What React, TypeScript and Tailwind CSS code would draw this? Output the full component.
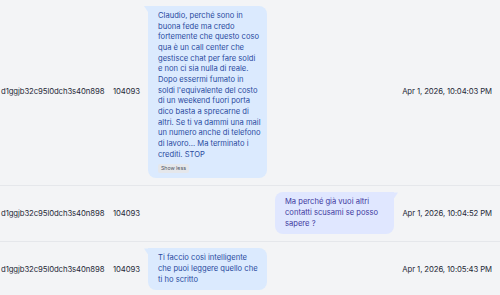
import React from "react";

type Msg = {
  id: string;
  num: string;
  lines: string[];
  out: boolean;
  date: string;
  showLess?: boolean;
};

const rows: Msg[] = [
  {
    id: "d1ggjb32c95l0dch3s40n898",
    num: "104093",
    lines: [
      "Claudio, perché sono in",
      "buona fede ma credo",
      "fortemente che questo coso",
      "qua è un call center che",
      "gestisce chat per fare soldi",
      "e non ci sia nulla di reale.",
      "Dopo essermi fumato in",
      "soldi l'equivalente del costo",
      "di un weekend fuori porta",
      "dico basta a sprecarne di",
      "altri. Se ti va dammi una mail",
      "un numero anche di telefono",
      "di lavoro... Ma terminato i",
      "crediti. STOP",
    ],
    out: false,
    date: "Apr 1, 2026, 10:04:03 PM",
    showLess: true,
  },
  {
    id: "d1ggjb32c95l0dch3s40n898",
    num: "104093",
    lines: ["Ma perché già vuoi altri", "contatti scusami se posso", "sapere ?"],
    out: true,
    date: "Apr 1, 2026, 10:04:52 PM",
  },
  {
    id: "d1ggjb32c95l0dch3s40n898",
    num: "104093",
    lines: ["Ti faccio così intelligente", "che puoi leggere quello che", "ti ho scritto"],
    out: false,
    date: "Apr 1, 2026, 10:05:43 PM",
  },
];

function Bubble({ m }: { m: Msg }) {
  const base =
    "relative w-[119px] px-[10px] pt-[5px] pb-[5px] text-[7.6px] leading-[10.667px] rounded-[8px]";
  return (
    <div className={m.out ? "flex justify-end pr-[4px]" : "flex justify-start pl-[4px]"}>
      <div
        className={
          m.out
            ? base + " bg-[#e0e7ff] text-[#3f3aa0] rounded-tr-none"
            : base + " bg-[#dbeafe] text-[#2a4a9e] rounded-tl-none"
        }
      >
        {m.out ? (
          <span className="absolute top-0 right-[-4px] w-[4px] h-[6px] bg-[#e0e7ff] [clip-path:polygon(0_0,100%_0,0_100%)]" />
        ) : (
          <span className="absolute top-0 left-[-4px] w-[4px] h-[6px] bg-[#dbeafe] [clip-path:polygon(0_0,100%_0,100%_100%)]" />
        )}
        <p>
          {m.lines.map((l, i) => (
            <span key={i} className="block whitespace-nowrap">
              {l}
            </span>
          ))}
        </p>
        {m.showLess && (
          <div className="mt-[4px] flex">
            <span className="bg-[#e5e7eb] text-[#4b5563] text-[5.2px] leading-[9px] px-[3px] rounded-[2px]">
              Show less
            </span>
          </div>
        )}
      </div>
    </div>
  );
}

export default function App() {
  return (
    <div className="w-[500px] h-[295px] overflow-hidden bg-[#f3f4f6] font-['Inter',sans-serif] text-[#1f2937]">
      {rows.map((m, i) => (
        <div
          key={i}
          className="flex items-center pt-[6px] pb-[7px] border-b border-[#e5e7eb] text-[7.75px] tracking-[-0.1px] whitespace-nowrap"
        >
          <div className="w-[113px] pl-[1px] shrink-0">{m.id}</div>
          <div className="w-[31px] shrink-0">{m.num}</div>
          <div className="w-[254px] shrink-0 tracking-normal">
            <Bubble m={m} />
          </div>
          <div className="flex-1 text-right pr-[8px]">{m.date}</div>
        </div>
      ))}
    </div>
  );
}
